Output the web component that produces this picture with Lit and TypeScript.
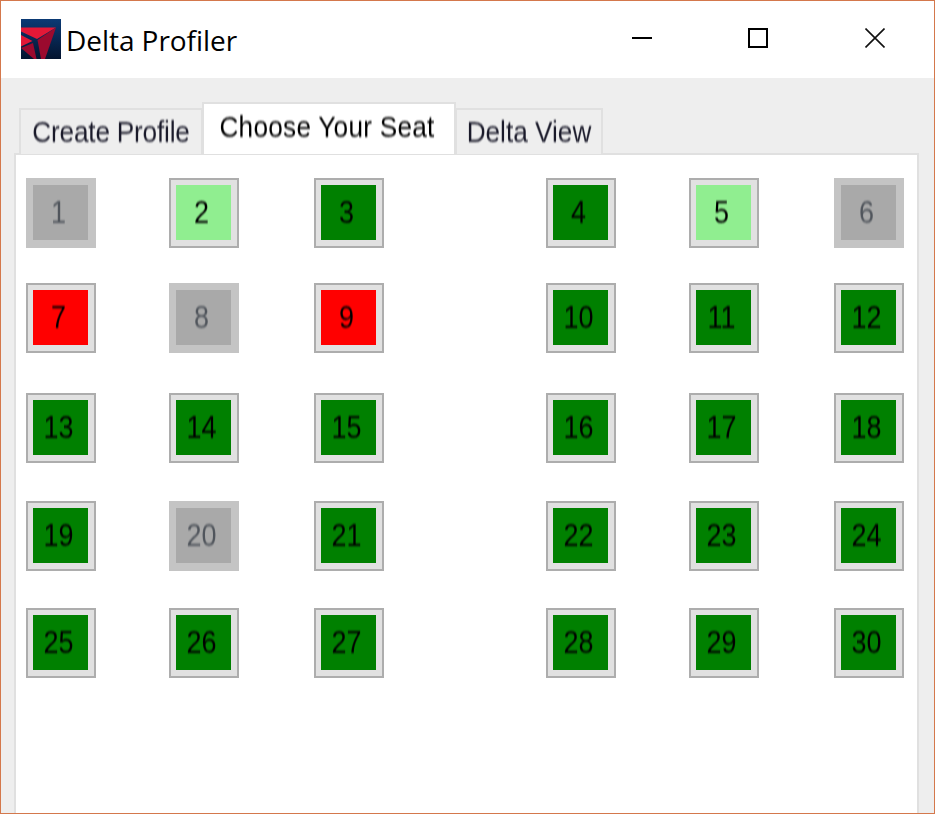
import { LitElement, html, css, svg } from "lit";
import { customElement } from "lit/decorators.js";

type Kind = "open" | "light" | "taken" | "off";
const kinds: Record<number, Kind> = { 1: "off", 2: "light", 5: "light", 6: "off", 7: "taken", 8: "off", 9: "taken", 20: "off" };
const seats = Array.from({ length: 30 }, (_, i) => i + 1);

@customElement("app-root")
export class AppRoot extends LitElement {
  static styles = css`
    :host { display: block; width: 935px; height: 814px; overflow: hidden; }
    .window {
      box-sizing: border-box; width: 935px; height: 814px; display: flex; flex-direction: column;
      border: 1px solid #d4784c; background: #eeeeee; overflow: hidden;
    }
    .titlebar {
      height: 77px; flex: none; background: #fff; display: flex; align-items: flex-start;
      padding: 18px 0 0 20px; box-sizing: border-box;
    }
    .logo { width: 40px; height: 40px; flex: none; display: block; }
    .title { font: 28px/42px "Open Sans", sans-serif; color: #000; margin-left: 5px; white-space: nowrap; letter-spacing: -0.05px; }
    .controls { margin-left: auto; display: flex; padding-right: 1px; }
    .ctl { width: 117px; height: 38px; display: flex; align-items: center; justify-content: center; }
    .ctl.min { width: 114px; }
    .ctl svg { display: block; }
    .body { flex: 1; min-height: 0; padding: 25px 15px 0 13px; display: flex; flex-direction: column; }
    .tabs { display: flex; align-items: flex-end; height: 51px; flex: none; padding-left: 5px; position: relative; z-index: 1; margin-bottom: -1px; }
    .tab {
      box-sizing: border-box; height: 46px; background: #eeeeee; border: 2px solid #e0e0e0; border-bottom: 0;
      display: flex; align-items: center; justify-content: center; white-space: nowrap; padding-top: 1px;
      font: 26.2px "Liberation Sans", Arial, sans-serif; color: #1a1a2a;
    }
    .tab span { display: block; transform: scaleY(1.14); filter: blur(0.7px); }
    .tab.active { height: 52px; background: #fff; margin: 0 -1px; position: relative; z-index: 2; color: #000; align-items: flex-start; padding: 8px 4px 0 0; letter-spacing: 0.25px; }
    .tab.first { width: 184px; letter-spacing: -0.2px; }
    .tab.second { width: 254px; }
    .tab.third { width: 148px; }
    .panel {
      flex: 1; min-height: 0; background: #fff; border: 2px solid #e0e0e0; border-bottom: 0; box-sizing: border-box;
      padding: 23px 0 0 10px; display: grid;
      grid-template-columns: 143px 145px 232px 143px 145px 70px;
      grid-template-rows: 105px 110px 108px 107px 70px; align-content: start;
    }
    .seat {
      box-sizing: border-box; width: 70px; height: 70px; padding: 5px 6px 6px 5px; border: 2px solid #adadad; background: #e1e1e1;
    }
    .seat.off { border-color: #c4c4c4; background: #c4c4c4; }
    .fill {
      box-sizing: border-box; height: 100%; display: flex; align-items: center; justify-content: center; color: #000;
      padding: 1px 4px 0 0;
      font: 27px "Liberation Sans", Arial, sans-serif; background: #008000;
    }
    .fill span { display: block; transform: scaleY(1.14); filter: blur(0.7px); }
    .light .fill { background: #90ee90; }
    .taken .fill { background: #ff0000; }
    .off .fill { background: #a9a9a9; color: #50555c; }
  `;

  private logo() {
    return svg`<svg class="logo" viewBox="0 0 40 40" xmlns="http://www.w3.org/2000/svg">
      <defs><linearGradient id="g" x1="0" y1="0" x2="0" y2="1"><stop offset="0" stop-color="#0b3a75"/><stop offset="1" stop-color="#04142f"/></linearGradient></defs>
      <rect width="40" height="40" fill="url(#g)"/>
      <path d="M0 8.5 L35 8.5 L16 20 L0 12.5 Z" fill="#e31837"/>
      <path d="M0 16 L11.5 22 L0 27.5 Z" fill="#e31837"/>
      <path d="M0 29 L12 24 L15.5 40 L13 40 Z" fill="#9b0a2e"/>
      <path d="M35 8.5 L16.5 21 L20 40 L24 40 Z" fill="#9b0a2e"/>
    </svg>`;
  }

  render() {
    return html`<div class="window">
      <div class="titlebar">
        ${this.logo()}
        <div class="title">Delta Profiler</div>
        <div class="controls">
          <div class="ctl min"><svg width="20" height="20" viewBox="0 0 20 20"><rect y="9" width="20" height="2" fill="#000"/></svg></div>
          <div class="ctl"><svg width="20" height="20" viewBox="0 0 20 20"><rect x="1" y="1" width="18" height="18" fill="none" stroke="#000" stroke-width="2"/></svg></div>
          <div class="ctl"><svg width="20" height="20" viewBox="0 0 20 20"><path d="M0.5 0.5 L19.5 19.5 M19.5 0.5 L0.5 19.5" stroke="#111" stroke-width="1.6"/></svg></div>
        </div>
      </div>
      <div class="body">
        <div class="tabs">
          <div class="tab first"><span>Create Profile</span></div>
          <div class="tab active second"><span>Choose Your Seat</span></div>
          <div class="tab third"><span>Delta View</span></div>
        </div>
        <div class="panel">
          ${seats.map((n) => html`<div class="seat ${kinds[n] ?? "open"}"><div class="fill"><span>${n}</span></div></div>`)}
        </div>
      </div>
    </div>`;
  }
}
